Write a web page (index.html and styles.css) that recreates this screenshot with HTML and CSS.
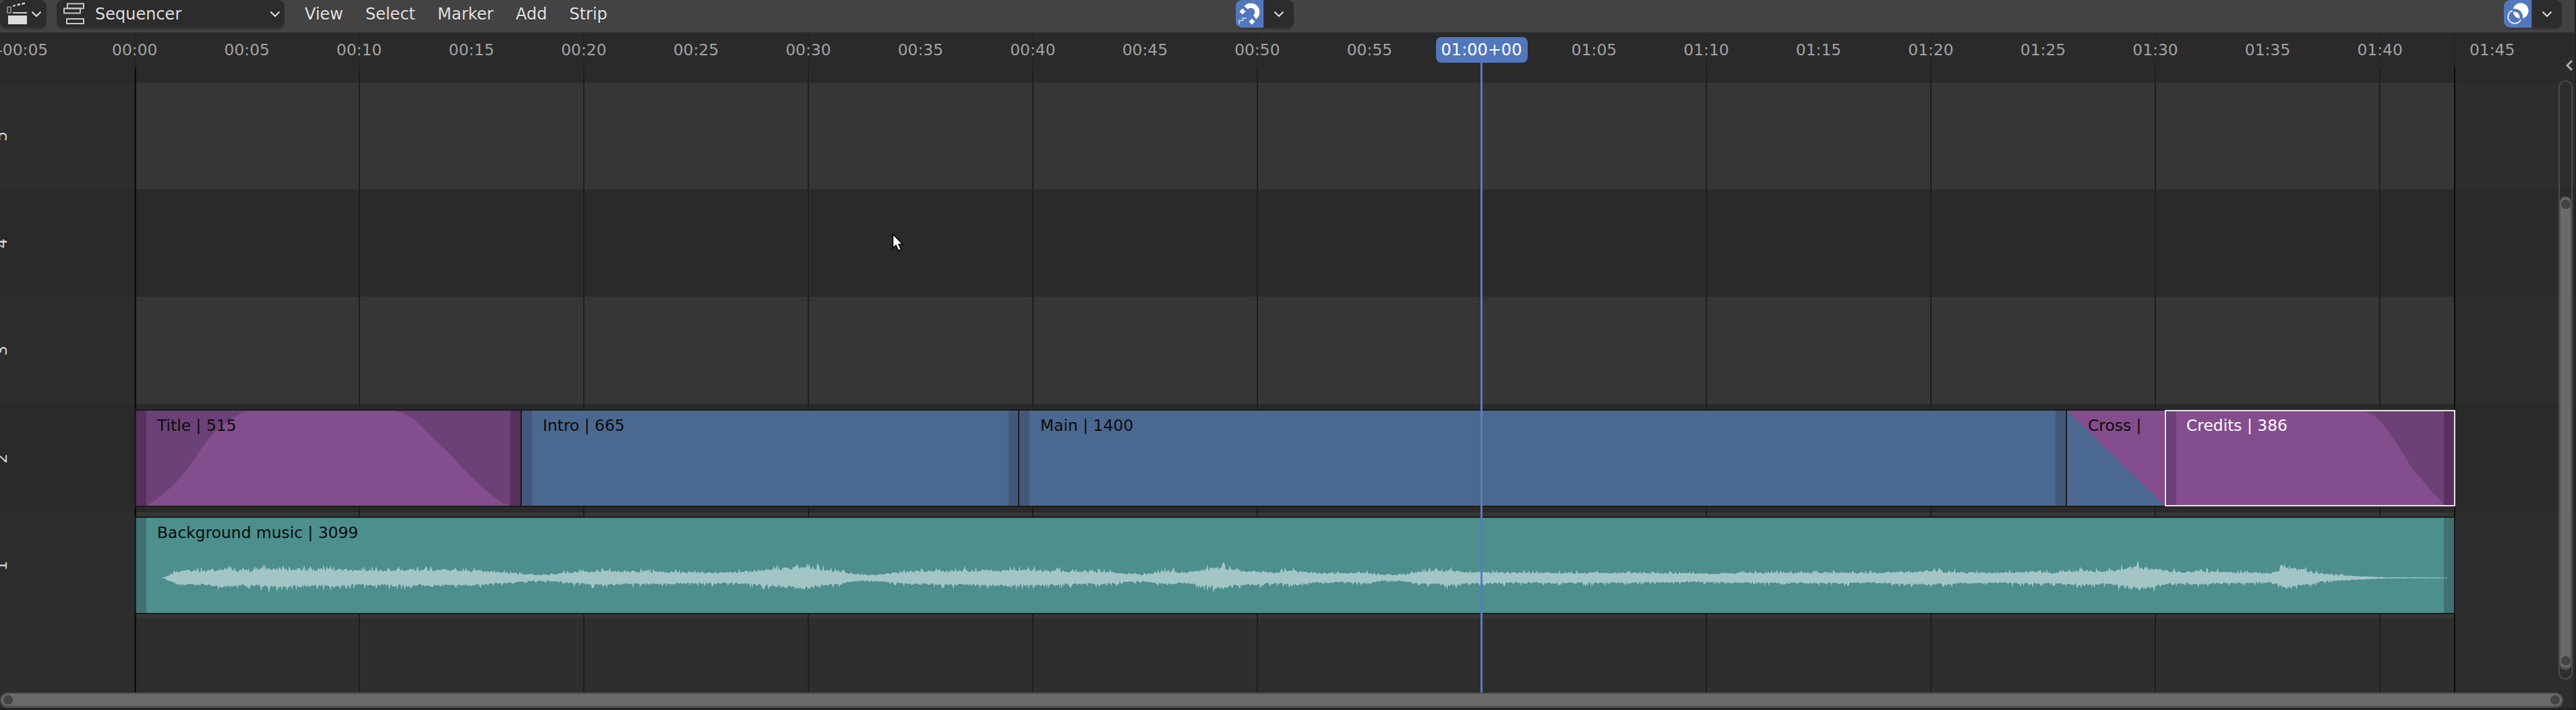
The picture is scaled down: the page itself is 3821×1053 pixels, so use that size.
FILE: index.html
```html
<!DOCTYPE html>
<html lang="en">
<head>
<meta charset="utf-8">
<title>Sequencer</title>
<link rel="stylesheet" href="styles.css">
</head>
<body>
<div class="app">
  <header class="header">
    <button class="btn btn-type">
      <svg class="ico-type" viewBox="0 0 46 41"><rect x="12" y="23" width="28" height="13" fill="#dcdcdc"/><rect x="19" y="18" width="21" height="2" fill="#cfcfcf"/><rect x="11" y="10.500" width="5" height="8.500" fill="none" stroke="#9a9a9a" stroke-width="1.500"/><path d="M19 10l4-1v-2l-4 1zM25.500 8.500l4.500-1v-2.500l-4.500 1zM32.500 7l4.500-1v-2.500l-4.500 1z" fill="#dcdcdc"/></svg>
      <svg class="chev" viewBox="0 0 16 10"><path d="M1.500 1.500L8 8l6.500-6.500" fill="none" stroke="#dcdcdc" stroke-width="2.200"/></svg>
    </button>
    <button class="btn btn-mode">
      <svg class="ico-mode" viewBox="0 0 42 41"><g fill="none" stroke="#c8c8c8" stroke-width="2"><rect x="16" y="5.500" width="24" height="7"/><rect x="11" y="12.500" width="24" height="7"/><rect x="15" y="28" width="25" height="7"/></g></svg>
      <span class="btn-label">Sequencer</span>
      <svg class="chev chev-end" viewBox="0 0 16 10"><path d="M1.500 1.500L8 8l6.500-6.500" fill="none" stroke="#dcdcdc" stroke-width="2.200"/></svg>
    </button>
    <nav class="menu">
      <span>View</span><span>Select</span><span>Marker</span><span>Add</span><span>Strip</span>
    </nav>
    <div class="toggle">
      <span class="toggle-on">
        <svg viewBox="0 0 41 41" class="ico-toggle"><path d="M15.300 11.500A9.500 9.500 0 1 1 28 25.500" fill="none" stroke="#fff" stroke-width="7"/><path d="M10 12.500l4.500 4.500-4.500 4.500-4.500-4.500zM24 27.500l4.500 4.500-4.500 4.500-4.500-4.500z" fill="#fff"/><path d="M5 36v-5.500h5.500v-3.500h5.500" fill="none" stroke="#b9c8e4" stroke-width="1.800"/></svg>
      </span>
      <span class="toggle-more"><svg class="chev" viewBox="0 0 16 10"><path d="M1.500 1.500L8 8l6.500-6.500" fill="none" stroke="#dcdcdc" stroke-width="2.200"/></svg></span>
    </div>
    <div class="toggle toggle-right">
      <span class="toggle-on">
        <svg viewBox="0 0 41 41" class="ico-toggle"><circle cx="25" cy="16" r="11.500" fill="#fff"/><circle cx="16" cy="25" r="9.800" fill="none" stroke="#5277bc" stroke-width="4.500"/><path d="M12.700 15.800A9.800 9.800 0 1 0 25 29" fill="none" stroke="#e4e8f0" stroke-width="2"/></svg>
      </span>
      <span class="toggle-more"><svg class="chev" viewBox="0 0 16 10"><path d="M1.500 1.500L8 8l6.500-6.500" fill="none" stroke="#dcdcdc" stroke-width="2.200"/></svg></span>
    </div>
  </header>

  <main class="timeline">
    <div class="ruler">
      <span>-00:05</span><span>00:00</span><span>00:05</span><span>00:10</span><span>00:15</span><span>00:20</span><span>00:25</span><span>00:30</span><span>00:35</span><span>00:40</span><span>00:45</span><span>00:50</span><span>00:55</span><span></span><span>01:05</span><span>01:10</span><span>01:15</span><span>01:20</span><span>01:25</span><span>01:30</span><span>01:35</span><span>01:40</span><span>01:45</span>
    </div>

    <div class="rows">
      <div class="row row-top dark"><div class="gutter"></div><div class="lane"></div><div class="gutter"></div></div>
      <div class="row row-5 light"><div class="gutter"><span class="chan">5</span></div><div class="lane"></div><div class="gutter"></div></div>
      <div class="row row-4 dark"><div class="gutter"><span class="chan">4</span></div><div class="lane"></div><div class="gutter"></div></div>
      <div class="row row-3 light"><div class="gutter"><span class="chan">3</span></div><div class="lane"></div><div class="gutter"></div></div>
      <div class="row row-2 dark">
        <div class="gutter"><span class="chan">2</span></div>
        <div class="lane">
          <div class="strip purple strip-title">
            <svg class="fade" viewBox="0 0 570 141"><path d="M15 141C32 132 58 111 80 81C100 50 122 16 166 0L383 0C398 3 410 10 421 21C438 38 452 52 465 64C480 80 495 98 508 108C525 125 540 136 555 141Z"/></svg>
            <i class="handle handle-l"></i><i class="handle handle-r"></i>
            <span class="strip-text">Title | 515</span>
          </div>
          <div class="strip blue strip-intro">
            <i class="handle handle-l"></i><i class="handle handle-r"></i>
            <span class="strip-text">Intro | 665</span>
          </div>
          <div class="strip blue strip-main">
            <i class="handle handle-l"></i><i class="handle handle-r"></i>
            <span class="strip-text">Main | 1400</span>
          </div>
          <div class="strip blue strip-cross">
            <svg class="fade" viewBox="0 0 145 141"><path d="M0 0L145 141V0Z"/></svg>
            <span class="strip-text">Cross |</span>
          </div>
          <div class="strip purple strip-credits">
            <svg class="fade" viewBox="0 0 427 139"><path d="M0 0H295C305 4 313 9 320 17C332 32 340 45 348 57C360 78 368 90 376 97C385 108 392 118 398 123C405 130 410 136 415 139H0Z"/></svg>
            <i class="handle handle-l"></i><i class="handle handle-r"></i>
            <span class="strip-text">Credits | 386</span>
          </div>
        </div>
        <div class="gutter"></div>
      </div>
      <div class="row row-1 light">
        <div class="gutter"><span class="chan">1</span></div>
        <div class="lane">
          <div class="strip teal strip-audio">
            <i class="handle handle-l"></i><i class="handle handle-r"></i>
            <svg class="wave" viewBox="0 0 3438 141"><path id="wave-path" d=""/></svg>
            <span class="strip-text">Background music | 3099</span>
          </div>
        </div>
        <div class="gutter"></div>
      </div>
      <div class="row row-0 base"><div class="gutter"></div><div class="lane"></div><div class="gutter"></div></div>
    </div>

    <div class="grid">
      <i></i><i></i><i></i><i></i><i></i><i></i><i></i><i></i><i></i><i></i><i></i>
    </div>
    <i class="range-line range-start"></i>
    <i class="range-line range-end"></i>

    <div class="playhead"><span class="playhead-label">01:00+00</span></div>

    <svg class="cursor" viewBox="0 0 20 28"><path d="M1.500 1.500V22l4.500-4.200 3.700 8 4-1.800-3.700-7.800h6z" fill="#fff" stroke="#000" stroke-width="1.500"/></svg>

    <div class="region-tab"><svg viewBox="0 0 12 18"><path d="M10 2L3 9l7 7" fill="none" stroke="#a8a8a8" stroke-width="3"/></svg></div>

    <div class="vscroll"><div class="vthumb"><i class="knob"></i><i class="knob"></i></div></div>
    <div class="hscroll"><i class="knob"></i><i class="knob"></i></div>
  </main>
  <div class="edge"></div>
</div>
<script src="wave.js"></script>
</body>
</html>
```
FILE: styles.css
```css
* { box-sizing: border-box; }
html, body { margin: 0; padding: 0; height: 100%; background: #1f1f1f; overflow: hidden; }
body { font-family: "DejaVu Sans", sans-serif; font-size: 23.4px; }

.app {
  width: 3821px;
  height: 1053px;
  display: flex;
  flex-direction: column;
  border-right: 2px solid #232323;
  overflow: hidden;
}

/* Header */
.header {
  flex: none;
  height: 48px;
  background: #434343;
  display: flex;
  align-items: flex-start;
  padding-right: 19px;
  font-size: 24px;
}
.btn {
  height: 41px;
  border: 0;
  padding: 0;
  margin: 0;
  background: #2c2c2c;
  border-radius: 9px;
  box-shadow: 0 3px 0 #383838;
  color: #dcdcdc;
  font: inherit;
  display: flex;
  align-items: center;
  flex: none;
}
.btn-type { width: 69px; }
.ico-type { width: 46px; height: 41px; flex: none; }
.chev { width: 16px; height: 10px; flex: none; }
.btn-mode { width: 338px; margin-left: 15px; padding-right: 6px; }
.ico-mode { width: 42px; height: 41px; flex: none; }
.btn-label { margin-left: 15px; }
.chev-end { margin-left: auto; }
.menu {
  flex: none;
  width: 1381px;
  margin-left: 30px;
  height: 41px;
  display: flex;
  align-items: center;
  gap: 33px;
  color: #e2e2e2;
  text-shadow: 0 1px 1px rgba(0, 0, 0, .45);
}
.toggle {
  flex: none;
  display: flex;
  height: 41px;
  width: 86px;
  border-radius: 9px;
  box-shadow: 0 3px 0 #383838;
  overflow: hidden;
}
.toggle-right { margin-left: auto; }
.toggle-on { width: 41px; background: #5277bc; flex: none; }
.ico-toggle { width: 41px; height: 41px; display: block; }
.toggle-more {
  flex: 1;
  background: #2c2c2c;
  border-left: 1px solid #3a3a3a;
  display: flex;
  align-items: center;
  justify-content: center;
}

/* Timeline */
.timeline {
  flex: 1;
  min-height: 0;
  position: relative;
  overflow: hidden;
  display: flex;
  flex-direction: column;
  background: #2a2a2a;
}
.ruler {
  flex: none;
  position: relative;
  z-index: 2;
  height: 52px;
  color: #a3a3a3;
  display: flex;
  align-items: center;
  margin-left: -50px;
  width: 4000px;
}
.ruler span { flex: none; width: 166.52px; text-align: center; }

.rows { flex: 1; display: flex; flex-direction: column; min-height: 0; }
.row { flex: none; display: grid; grid-template-columns: 202px 3440px 1fr; }
.row-top { height: 23px; }
.row-5 { height: 158px; }
.row-4 { height: 159px; }
.row-3 { height: 159px; }
.row-2 { height: 161px; }
.row-1 { height: 157px; }
.row-0 { flex: 1; }

.dark .gutter, .dark .lane { background: #2a2a2a; }
.light .gutter { background: #2d2d2d; }
.light .lane { background: #363636; }
.base .gutter { background: #2d2d2d; }
.base .lane { background: #2e2e2e; }

.gutter { display: flex; align-items: center; overflow: hidden; }
.lane { position: relative; }
.chan {
  width: 24px;
  height: 24px;
  line-height: 24px;
  text-align: center;
  flex: none;
  margin-left: -10px;
  transform: rotate(-90deg);
  color: #d6d6d6;
}

/* Strips */
.strip {
  position: absolute;
  top: 10px;
  height: 141px;
  overflow: hidden;
  z-index: 2;
  box-shadow: 0 0 0 2px #1b1b1b;
  background: var(--base);
  color: #0b0b0b;
}
.row-2 .strip { top: 10px; }
.row-1 .strip { top: 8px; }
.purple { --base: #6c4177; --bright: #844d8e; --handle: #57305d; }
.blue { --base: #4b6890; --bright: #844d8e; --handle: #41587a; }
.teal { --base: #4c8f8d; --bright: #4c8f8d; --handle: #3f7270; }
.strip-title { left: 0; width: 570px; }
.strip-intro { left: 572px; width: 737px; }
.strip-main { left: 1310px; width: 1552px; }
.strip-cross { left: 2864px; width: 145px; }
.row-2 .strip-credits {
  left: 3009px;
  width: 431px;
  top: 9px;
  height: 143px;
  border: 2px solid #e2e2e2;
  box-shadow: none;
  color: #fff;
}
.strip-audio { left: 0; width: 3438px; }
.fade { position: absolute; inset: 0; width: 100%; height: 100%; display: block; }
.fade path { fill: var(--bright); }
.handle { position: absolute; top: 0; bottom: 0; width: 15px; background: var(--handle); }
.handle-l { left: 0; }
.handle-r { right: 0; }
.strip-credits .handle-l { background: #6c4177; }
.strip-text {
  position: absolute;
  left: 31px;
  top: 9px;
  line-height: 27px;
  white-space: nowrap;
}
.strip-credits .strip-text { left: 30px; top: 8px; }
.wave { position: absolute; inset: 0; width: 100%; height: 100%; display: block; }
.wave path { fill: #a4c5c6; }

/* Grid lines */
.grid {
  position: absolute;
  top: 0;
  bottom: 0;
  left: 199px;
  display: flex;
  z-index: 1;
}
.grid i {
  flex: none;
  width: 333.05px;
  background: linear-gradient(#262626 52px, #1e1e1e 52px) left top / 2px 100% no-repeat;
}
.range-line {
  position: absolute;
  top: 0;
  bottom: 0;
  width: 2px;
  z-index: 1;
  background: linear-gradient(#262626 52px, #0c0c0c 52px);
}
.range-start { left: 200px; }
.range-end { left: 3640px; }

/* Playhead */
.playhead {
  position: absolute;
  left: 2196px;
  top: 7px;
  bottom: 0;
  width: 3px;
  background: #5a7dbb;
  z-index: 3;
}
.playhead-label {
  position: absolute;
  left: 1.5px;
  top: 0;
  transform: translateX(-50%);
  width: 136px;
  height: 38px;
  line-height: 38px;
  text-align: center;
  border-radius: 8px;
  background: #5277bc;
  color: #fff;
  font-size: 24px;
}

.cursor { position: absolute; left: 1323px; top: 298px; width: 20px; height: 28px; z-index: 5; }

.region-tab {
  position: absolute;
  right: 0;
  top: 33px;
  width: 17px;
  height: 31px;
  background: #2c2c2c;
  border-radius: 6px 0 0 6px;
  display: flex;
  align-items: center;
  justify-content: center;
  z-index: 4;
}
.region-tab svg { width: 12px; height: 18px; display: block; }

/* Scrollbars */
.vscroll {
  position: absolute;
  left: 3795px;
  top: 71px;
  width: 21px;
  height: 889px;
  border: 2px solid #4b4b4b;
  border-radius: 11px;
  z-index: 4;
}
.vthumb {
  position: absolute;
  left: -1px;
  right: -1px;
  top: 170px;
  height: 703px;
  background: #6a6a6a;
  border: 2px solid #4f4f4f;
  border-bottom-width: 4px;
  border-radius: 11px;
  display: flex;
  flex-direction: column;
  align-items: center;
  justify-content: space-between;
  padding: 3px 0;
}
.hscroll {
  position: absolute;
  left: 0;
  top: 979px;
  width: 3802px;
  height: 23px;
  background: #6a6a6a;
  border: 2px solid #4f4f4f;
  border-bottom-width: 3px;
  border-radius: 12px;
  display: flex;
  align-items: center;
  justify-content: space-between;
  padding: 0 3px;
  z-index: 4;
}
.knob { flex: none; width: 14px; height: 14px; border-radius: 50%; background: #444; }

.edge { flex: none; height: 3px; background: #232323; }
```
FILE: wave.js
```js
// Draws the audio waveform of the music strip from its loudness envelope.
(function () {
  var env = [
    [240,0],[246,2],[258,8],[268,12],[300,11],[335,14],[360,11],[400,15],[430,13],[480,14],[520,12],
    [600,13],[670,13],[730,10],[790,5],[815,5],[850,9],[900,11],[960,10],[1020,9],[1080,9],[1130,12],[1194,17],[1235,11],[1275,5],[1300,5],[1350,10],
    [1400,11],[1430,12],[1530,12],[1650,9],[1675,7],[1695,5],[1730,11],[1760,9],[1810,18],[1850,11],
    [1900,9],[1915,12],[1950,8],[1990,7],[2030,8],[2050,5],[2080,5],[2110,10],[2155,12],[2180,8],[2210,9],[2250,8],
    [2340,9],[2400,8],[2510,7],[2600,8],[2680,9],[2770,8],[2856,11],[2924,8],
    [2950,8],[3020,10],[3045,8],[3085,12],[3120,10],[3172,18],[3220,10],[3280,10],[3330,8],[3335,9],[3370,7],
    [3390,16],[3420,12],[3445,6],[3480,3.5],[3525,1.5],[3540,0.8],[3615,0.6],[3630,0.3]
  ];
  var seed = 4711;
  function rnd() {
    seed = (seed * 1103515245 + 12345) & 0x7fffffff;
    return seed / 0x7fffffff;
  }
  function level(x) {
    for (var i = 1; i < env.length; i++) {
      if (x <= env[i][0]) {
        var a = env[i - 1], b = env[i];
        return a[1] + (b[1] - a[1]) * (x - a[0]) / (b[0] - a[0]);
      }
    }
    return 0;
  }
  function jitter() {
    var r = rnd();
    return r > 0.9 ? 1.25 + rnd() * 0.25 : 0.72 + rnd() * 0.36;
  }
  var top = [], bottom = [], originX = 202, originY = 768, mid = 857 - originY;
  var drift = 1;
  for (var x = 240; x <= 3630; x += 1.5) {
    drift += (0.8 + rnd() * 0.4 - drift) * 0.08;
    var h = level(x) * drift;
    top.push((x - originX).toFixed(1) + " " + (mid - h * jitter()).toFixed(1));
    bottom.push((x - originX).toFixed(1) + " " + (mid + Math.max(0.5, h * jitter())).toFixed(1));
  }
  document.getElementById("wave-path").setAttribute(
    "d", "M" + top.join("L") + "L" + bottom.reverse().join("L") + "Z"
  );
})();
```
